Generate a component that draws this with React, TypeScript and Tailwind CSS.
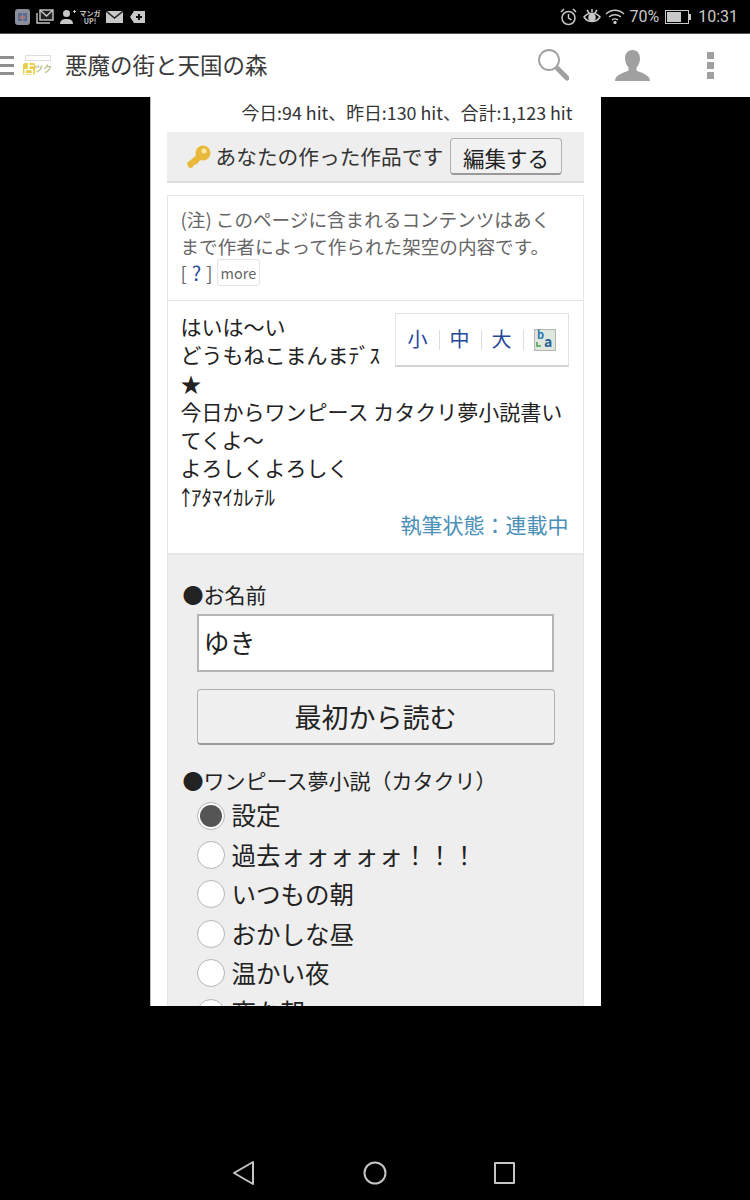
const JP = "font-['Noto_Sans_CJK_JP','Noto_Sans',sans-serif]";

const chapters = ['設定', '過去ォォォォォ！！！', 'いつもの朝', 'おかしな昼', '温かい夜', '夜な朝'];

function StatusBar() {
  return (
    <div className="flex h-[33px] items-center justify-between bg-black pl-[15px] pr-[12px] text-[#c8c8c8]">
      <div className="flex items-center gap-[6px]">
        <svg width="15" height="16" viewBox="0 0 15 16">
          <rect width="15" height="16" rx="3" fill="#8b8f9c" />
          <path d="M3 4h4v8H3zM8 4h4v8H8z" fill="#5a6a90" />
          <path d="M5 7h5v3H5z" fill="#a87878" />
        </svg>
        <svg width="18" height="15" viewBox="0 0 18 15" fill="none" stroke="#c8c8c8" strokeWidth="1.400">
          <rect x="4" y="1" width="13" height="10" fill="#222" />
          <path d="M4 1l6.500 6L17 1M1 4v10h13" />
        </svg>
        <svg width="16" height="15" viewBox="0 0 16 15" fill="#c8c8c8">
          <circle cx="6.500" cy="4.500" r="3.500" />
          <path d="M0 15c0-4 3-5 6.500-5s6.500 1 6.500 5z" />
          <path d="M13 2h3v1h-3zM14 1h1v3h-1z" />
        </svg>
        <div className="flex w-[16px] flex-col items-center text-[7px] leading-[8px] font-bold">
          <span className="whitespace-nowrap">マンガ</span>
          <span>UP!</span>
        </div>
        <svg width="17" height="12" viewBox="0 0 17 12" className="ml-[2px]">
          <rect width="17" height="12" fill="#c8c8c8" />
          <path d="M0 0l8.500 7L17 0" fill="none" stroke="#222" strokeWidth="1.400" />
        </svg>
        <svg width="15" height="12" viewBox="0 0 15 12" className="ml-[1px]">
          <path d="M4 0h11v12H4L0 6z" fill="#c8c8c8" />
          <path d="M6 6h6M9 3v6" stroke="#111" strokeWidth="2" />
        </svg>
      </div>
      <div className="flex items-center gap-[4px]">
        <svg width="17" height="18" viewBox="0 0 17 18" fill="none" stroke="#c8c8c8" strokeWidth="1.500">
          <circle cx="8.500" cy="10" r="6.500" />
          <path d="M8.500 6v4l3 2M1 4l3-3M16 4l-3-3" />
        </svg>
        <svg width="18" height="16" viewBox="0 0 18 16" fill="none" stroke="#c8c8c8" strokeWidth="1.500" className="ml-[2px]">
          <path d="M1 8c4-5 12-5 16 0-4 6-12 6-16 0z" />
          <circle cx="9" cy="8.500" r="3" fill="#c8c8c8" />
          <path d="M4 1l2 3M9 0v3M14 1l-2 3" />
        </svg>
        <svg width="20" height="15" viewBox="0 0 20 15" fill="none" stroke="#c8c8c8" strokeWidth="1.300">
          <path d="M1 5c5-5 13-5 18 0M4 8c3.500-3 8.500-3 12 0M7 11c2-1.500 4-1.500 6 0" />
          <circle cx="10" cy="13.500" r="1" fill="#c8c8c8" />
        </svg>
        <span className="text-[16px] leading-none font-['Roboto',sans-serif]">70%</span>
        <div className="ml-[2px] flex items-center">
          <div className="h-[14px] w-[24px] border border-[#c8c8c8] p-[1px]">
            <div className="h-full w-[70%] bg-[#c8c8c8]" />
          </div>
          <div className="h-[6px] w-[2px] bg-[#c8c8c8]" />
        </div>
        <span className="ml-[3px] text-[16px] leading-none font-['Roboto',sans-serif]">10:31</span>
      </div>
    </div>
  );
}

function AppHeader() {
  return (
    <div className="flex h-[64px] items-center border-t border-[#555] bg-white">
      <div className="flex w-[14px] flex-col gap-[5px]">
        <div className="h-[3px] bg-[#8f8f8f]" />
        <div className="h-[3px] bg-[#8f8f8f]" />
        <div className="h-[3px] bg-[#8f8f8f]" />
      </div>
      <div className="ml-[9px] flex h-[22px] w-[30px] flex-col items-center">
        <div className="h-[6px] w-[26px] border border-[#ddd] bg-white" />
        <div className="flex h-[16px] w-[30px] items-center whitespace-nowrap text-[12px] leading-none font-bold">
          <span className="rounded-[2px] bg-[#e8cf45] text-white">占</span>
          <span className="-ml-[1px] text-[9px] text-[#b9c088]">ツク</span>
        </div>
      </div>
      <div className="mb-[3px] ml-[12px] text-[22.500px] leading-none text-[#3a3a3a]">悪魔の街と天国の森</div>
      <div className="ml-auto flex items-center">
        <svg width="32" height="32" viewBox="0 0 32 32" fill="none" className="mb-[2px] mr-[46px]">
          <circle cx="12" cy="11" r="10" stroke="#a0a0a0" strokeWidth="1.800" />
          <path d="M19 18l2 2" stroke="#a0a0a0" strokeWidth="2" />
          <path d="M21 20l9 9" stroke="#a0a0a0" strokeWidth="5" strokeLinecap="round" />
        </svg>
        <svg width="35" height="31" viewBox="0 0 35 31" fill="#a0a0a0" className="mr-[57px]">
          <path d="M17.500 0c5 0 7.500 4 7.500 8.500 0 3.500-1.500 7-3.500 9v3c3 2 13.500 3.500 13.500 10.500H0c0-7 10.500-8.500 13.500-10.500v-3c-2-2-3.500-5.500-3.500-9C10 4 12.500 0 17.500 0z" />
        </svg>
        <div className="mr-[36px] flex flex-col gap-[3px]">
          <div className="h-[7px] w-[7px] bg-[#a0a0a0]" />
          <div className="h-[7px] w-[7px] bg-[#a0a0a0]" />
          <div className="h-[7px] w-[7px] bg-[#a0a0a0]" />
        </div>
      </div>
    </div>
  );
}

function FontSizeBox() {
  return (
    <div className="float-right mr-[1px] mt-[12px] ml-[13px] flex h-[54px] w-[174px] items-center border border-[#e2e2e2] border-b-[2px] border-b-[#d4d4d4] pl-[12px] text-[20px] text-[#24489c]">
      <span className="w-[21px]">小</span>
      <div className="mx-[10px] h-[20px] w-px bg-[#ddd]" />
      <span className="w-[21px]">中</span>
      <div className="mx-[10px] h-[20px] w-px bg-[#ddd]" />
      <span className="w-[21px]">大</span>
      <div className="mx-[10px] h-[20px] w-px bg-[#ddd]" />
      <svg width="22" height="22" viewBox="0 0 22 22">
        <rect x="0.500" y="0.500" width="21" height="21" fill="#dfe7df" stroke="#b5b5b5" />
        <text x="3" y="10" fontSize="11" fontWeight="700" fill="#2a78b0">b</text>
        <text x="10" y="18" fontSize="14" fontWeight="700" fill="#2a6496">a</text>
        <path d="M3 13v4h4" fill="none" stroke="#4aa54a" strokeWidth="1.500" />
      </svg>
    </div>
  );
}

export default function App() {
  return (
    <div className={`flex h-[1200px] w-[750px] flex-col overflow-hidden bg-black ${JP}`}>
      <StatusBar />
      <AppHeader />
      <div className="mx-auto h-[909px] w-[451px] overflow-hidden border-l border-[#bbb] bg-white">
        <div className="h-[35px] whitespace-nowrap pr-[28px] pt-[2px] text-right text-[17.850px] leading-[26px] text-[#333]">
          今日:94 hit、昨日:130 hit、合計:1,123 hit
        </div>
        <div className="ml-[16px] mr-[17px] flex h-[51px] items-center border-b-[2px] border-[#ddd] bg-[#eeeeee] pl-[19px]">
          <svg width="26" height="24" viewBox="0 0 26 24" className="shrink-0">
            <circle cx="17" cy="8" r="7.500" fill="#e9b93c" />
            <path d="M12 9L1 18l1.500 4.500 3.500.5 2-3 3-1 5-6z" fill="#e9b93c" />
            <circle cx="18" cy="6" r="2.500" fill="#fbe9a8" />
          </svg>
          <span className="ml-[4px] text-[20.700px] leading-none whitespace-nowrap text-[#333]">あなたの作った作品です</span>
          <button className="ml-[7px] h-[37px] w-[112px] shrink-0 rounded-[4px] border border-[#b0b0b0] border-b-[2px] border-b-[#999] bg-[#f1f1f1] pt-[4px] text-[21.500px] leading-none text-[#222]">
            編集する
          </button>
        </div>
        <div className="ml-[16px] mr-[17px] mt-[12px] border border-[#e6e6e6]">
          <div className="h-[105px] border-b border-[#e2e2e2] px-[13px] pt-[9px] text-[18.600px] leading-[27px] text-[#666]">
            <div>(注) このページに含まれるコンテンツはあく</div>
            <div>まで作者によって作られた架空の内容です。</div>
            <div className="flex items-center">
              <span>[</span>
              <span className="mx-[5px] text-[20px] text-[#24489c]">?</span>
              <span>]</span>
              <span className="ml-[4px] rounded-[3px] border border-[#e2e2e2] px-[3px] text-[14.500px] leading-[25px]">more</span>
            </div>
          </div>
          <div className="h-[252px] px-[13px] text-[21px] leading-[28.300px] text-[#222]">
            <FontSizeBox />
            <div className="pt-[11px]">はいは～い</div>
            <div>どうもねこまんまﾃﾞｽ</div>
            <div>★</div>
            <div>今日からワンピース カタクリ夢小説書いてくよ～</div>
            <div>よろしくよろしく</div>
            <div>￪ｱﾀﾏｲｶﾚﾃﾙ</div>
            <div className="pr-[1px] text-right text-[#4a90b8]">執筆状態：連載中</div>
          </div>
          <div className="h-[460px] border-t-[2px] border-[#e6e6e6] bg-[#eeeeee] pt-[24px]">
            <div className="pl-[15px] text-[21px] leading-[30px] text-[#222]">●お名前</div>
            <div className="ml-[29px] mt-[5px] flex h-[58px] w-[357px] items-center border-[2px] border-[#b5b5b5] bg-white pb-[4px] pl-[5px] text-[26px] text-[#222]">
              ゆき
            </div>
            <button className="ml-[29px] mt-[17px] h-[56px] w-[358px] rounded-[4px] border border-[#b0b0b0] border-b-[2px] border-b-[#999] bg-[#f0f0f0] text-[27px] leading-none text-[#222]">
              最初から読む
            </button>
            <div className="mt-[20px] whitespace-nowrap pl-[15px] text-[21px] leading-[30px] text-[#222]">●ワンピース夢小説（カタクリ）</div>
            <div className="mt-[1px] flex flex-col pl-[29px]">
              {chapters.map((label, i) => (
                <div key={label} className="flex h-[39.400px] items-center gap-[7px] text-[24.500px] leading-none whitespace-nowrap text-[#222]">
                  <div className="flex h-[28px] w-[28px] items-center justify-center rounded-full border-[1.500px] border-[#b5b5b5] bg-white">
                    {i === 0 && <div className="h-[22px] w-[22px] rounded-full bg-[#555]" />}
                  </div>
                  <span>{label}</span>
                </div>
              ))}
            </div>
          </div>
        </div>
      </div>
      <div className="flex flex-1 items-end justify-center pb-[14px]">
        <svg width="290" height="26" viewBox="0 0 290 26" fill="none" stroke="#c4c4c4" strokeWidth="2" strokeLinejoin="round" className="ml-[5px]">
          <path d="M1 13L20 2v22z" />
          <circle cx="142" cy="13" r="10.500" />
          <rect x="262" y="3" width="19" height="20" />
        </svg>
      </div>
    </div>
  );
}
